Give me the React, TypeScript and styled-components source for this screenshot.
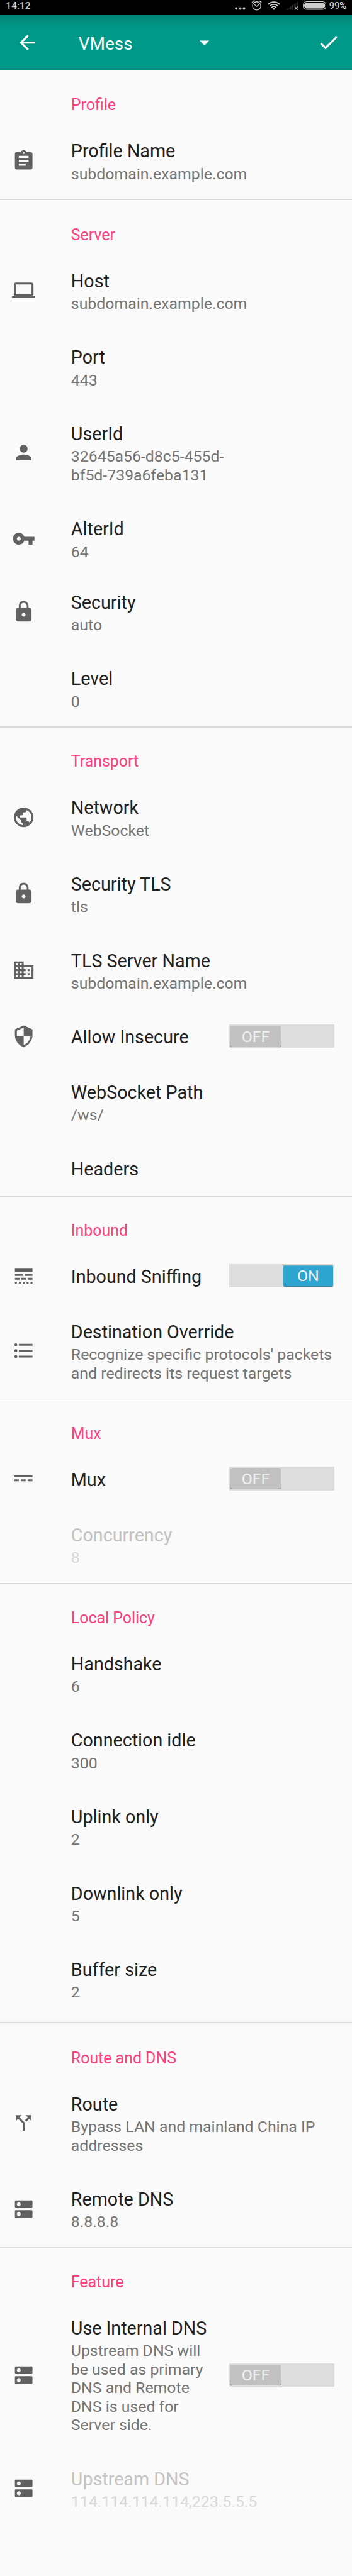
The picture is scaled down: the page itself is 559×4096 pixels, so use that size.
import React from "react";
import styled, { createGlobalStyle, css } from "styled-components";
import type { IconType } from "react-icons";
import {
  MdArrowBack,
  MdArrowDropDown,
  MdAssignment,
  MdCallSplit,
  MdCheck,
  MdDns,
  MdDomain,
  MdFormatListBulleted,
  MdLaptop,
  MdLineStyle,
  MdLock,
  MdPerson,
  MdPublic,
  MdSecurity,
  MdVpnKey,
} from "react-icons/md";

/* Device pixels of a 1080-wide phone converted to page pixels. */
const RATIO = 4096 / 7912;
const u = (n: number) => `${(n * RATIO).toFixed(3)}px`;

const GlobalStyle = createGlobalStyle`
  html, body { margin: 0; padding: 0; background: #fafafa; }
  body { font-family: Roboto, "Liberation Sans", sans-serif; overflow-x: hidden; }
  svg { display: block; flex: none; }
`;

const Screen = styled.div`
  display: flex;
  flex-direction: column;
  width: 100%;
  min-height: 4096px;
  overflow: hidden;
  background: #fafafa;
`;

const StatusBar = styled.header`
  display: flex;
  align-items: flex-start;
  justify-content: space-between;
  height: ${u(47)};
  padding: 0 ${u(18)} 0 ${u(18)};
  box-sizing: border-box;
  background: #000;
  color: #cccccc;
`;

const StatusText = styled.span`
  font-size: ${u(30)};
  line-height: ${u(36)};
  font-weight: 500;
  white-space: nowrap;
`;

const StatusTray = styled.div`
  display: flex;
  align-items: flex-start;
`;

const BatteryText = styled(StatusText)`
  width: ${u(52)};
  margin-left: ${u(9)};
  font-size: ${u(29)};
  letter-spacing: -0.4px;
`;

const Toolbar = styled.nav`
  display: flex;
  align-items: center;
  height: ${u(168)};
  padding: 0 ${u(36)} 0 ${u(49)};
  box-sizing: border-box;
  color: #fff;
  background: linear-gradient(rgba(0, 0, 0, 0.13), rgba(0, 0, 0, 0) ${u(40)}), #009888;

  svg {
    width: ${u(72)};
    height: ${u(72)};
  }
`;

const ProtocolPicker = styled.div`
  display: flex;
  flex: 1;
  align-items: center;
  margin-left: ${u(120)};
`;

const ProtocolName = styled.span`
  width: ${u(351)};
  padding-top: ${u(7)};
  font-size: ${u(54)};
  line-height: ${u(64)};
`;

const Section = styled.section<{ $lead?: number }>`
  padding-top: ${(p) => u(p.$lead ?? 0)};
`;

const Divider = styled.div<{ $hidden?: boolean }>`
  height: ${u(3)};
  background: ${(p) => (p.$hidden ? "transparent" : "#dcdcdc")};
`;

const Category = styled.h2`
  height: ${u(158)};
  margin: 0;
  padding: ${u(76)} 0 0 ${u(218)};
  box-sizing: border-box;
  font-size: ${u(48.1)};
  line-height: ${u(57)};
  font-weight: 400;
  color: #ff4081;
`;

const Row = styled.div<{ $after?: number }>`
  display: flex;
  align-items: center;
  margin-bottom: ${(p) => u(p.$after ?? 0)};
  padding-right: ${u(54)};
`;

const IconSlot = styled.div`
  width: ${u(181)};
  padding-left: ${u(37)};
  flex: none;
  color: #616161;

  svg {
    width: ${u(72)};
    height: ${u(72)};
  }
`;

const Labels = styled.div`
  flex: 1;
  min-width: 0;
  padding: ${u(57.3)} 0 ${u(48.7)};
`;

const Title = styled.div<{ $disabled?: boolean }>`
  font-size: ${u(55.4)};
  line-height: ${u(64)};
  white-space: nowrap;
  color: ${(p) => (p.$disabled ? "#c3c3c3" : "#212121")};
`;

const Summary = styled.div<{ $disabled?: boolean }>`
  margin-top: ${u(8)};
  font-size: ${u(48)};
  line-height: ${u(57)};
  white-space: pre;
  color: ${(p) => (p.$disabled ? "#d8d8d8" : "#757575")};
`;

const Track = styled.div<{ $on: boolean }>`
  display: flex;
  align-items: center;
  justify-content: ${(p) => (p.$on ? "flex-end" : "flex-start")};
  width: ${u(322)};
  height: ${u(72)};
  padding: 0 ${u(4)};
  box-sizing: border-box;
  background: #dddddd;
`;

const Thumb = styled.div<{ $on: boolean }>`
  width: ${u(153)};
  height: ${u(62)};
  border-radius: ${u(4)};
  font-size: ${u(48)};
  line-height: ${u(65)};
  text-align: center;
  color: #f0f0f0;
  ${(p) =>
    p.$on
      ? css`
          background: #2da5d0;
          box-shadow: 0 ${u(2)} ${u(1)} #3c87a3, inset 0 ${u(2)} 0 #5bb6d8;
        `
      : css`
          background: #c1c1c1;
          box-shadow: 0 ${u(2)} ${u(1)} #737373;
        `}
`;

const MoreDots = () => (
  <svg width={u(42)} height={u(36)} viewBox="716 0 42 36" fill="#ccc">
    <circle cx="724" cy="26" r="4" />
    <circle cx="736" cy="26" r="4" />
    <circle cx="748" cy="26" r="4" />
  </svg>
);

const AlarmIcon = () => (
  <svg width={u(56)} height={u(36)} viewBox="758 0 56 36" fill="none" stroke="#ccc">
    <circle cx="786.3" cy="18" r="12.7" strokeWidth="2.6" />
    <path d="M780 14l6.3 5.5 6.3-5.5" strokeWidth="2.8" />
    <path d="M771.5 9q2-5 8.5-7.5M801 9q-2-5-8.5-7.5" strokeWidth="3" />
  </svg>
);

const WifiIcon = () => (
  <svg width={u(56)} height={u(36)} viewBox="814 0 56 36" fill="none" stroke="#ccc" strokeWidth="3.6">
    <path d="M821 13.5a25.5 25.5 0 0 1 36 0M826 18.5a18.5 18.5 0 0 1 26 0M831.5 23a11 11 0 0 1 15 0" />
    <circle cx="839" cy="27" r="3.2" fill="#ccc" stroke="none" />
  </svg>
);

const NoSignalIcon = () => (
  <svg width={u(58)} height={u(36)} viewBox="870 0 58 36">
    <path
      fill="#2a2a2a"
      d="M876 30l9-6v6zM887 22l5-3.5v11.5h-5zM894 17l5-3.5v16.5h-5zM901 12l5-3.5v8.5h-5zM908 8l5-3.5v12.5h-5z"
    />
    <path d="M902.5 20l10 10M912.5 20l-10 10" stroke="#ccc" strokeWidth="2.4" />
  </svg>
);

const BatteryIcon = () => (
  <svg width={u(72)} height={u(36)} viewBox="928 0 72 36">
    <rect x="929" y="5" width="70" height="24" rx="10.5" fill="none" stroke="#ccc" strokeWidth="2" />
    <rect x="932" y="8" width="64" height="18" rx="8" fill="#ccc" />
  </svg>
);

const MuxIcon = () => (
  <svg viewBox="0 0 24 24" fill="currentColor">
    <path d="M2 9v2h19V9H2zm0 4v2h5v-2H2zm7 0v2h5v-2H9zm7 0v2h5v-2h-5z" />
  </svg>
);

interface Preference {
  title: string;
  summary?: string;
  icon?: IconType | React.FC;
  toggle?: "ON" | "OFF";
  disabled?: boolean;
  after?: number;
}

interface Group {
  name: string;
  lead?: number;
  items: Preference[];
}

const groups: Group[] = [
  {
    name: "Profile",
    items: [{ title: "Profile Name", summary: "subdomain.example.com", icon: MdAssignment }],
  },
  {
    name: "Server",
    lead: 3,
    items: [
      { title: "Host", summary: "subdomain.example.com", icon: MdLaptop },
      { title: "Port", summary: "443" },
      { title: "UserId", summary: "32645a56-d8c5-455d-\nbf5d-739a6feba131", icon: MdPerson },
      { title: "AlterId", summary: "64", icon: MdVpnKey, after: -10 },
      { title: "Security", summary: "auto", icon: MdLock },
      { title: "Level", summary: "0" },
    ],
  },
  {
    name: "Transport",
    items: [
      { title: "Network", summary: "WebSocket", icon: MdPublic },
      { title: "Security TLS", summary: "tls", icon: MdLock },
      { title: "TLS Server Name", summary: "subdomain.example.com", icon: MdDomain },
      { title: "Allow Insecure", icon: MdSecurity, toggle: "OFF" },
      { title: "WebSocket Path", summary: "/ws/" },
      { title: "Headers" },
    ],
  },
  {
    name: "Inbound",
    items: [
      { title: "Inbound Sniffing", icon: MdLineStyle, toggle: "ON" },
      {
        title: "Destination Override",
        summary: "Recognize specific protocols' packets\nand redirects its request targets",
        icon: MdFormatListBulleted,
      },
    ],
  },
  {
    name: "Mux",
    items: [
      { title: "Mux", icon: MuxIcon, toggle: "OFF" },
      { title: "Concurrency", summary: "8", disabled: true },
    ],
  },
  {
    name: "Local Policy",
    items: [
      { title: "Handshake", summary: "6" },
      { title: "Connection idle", summary: "300" },
      { title: "Uplink only", summary: "2" },
      { title: "Downlink only", summary: "5" },
      { title: "Buffer size", summary: "2", after: 14 },
    ],
  },
  {
    name: "Route and DNS",
    lead: 3,
    items: [
      { title: "Route", summary: "Bypass LAN and mainland China IP\naddresses", icon: MdCallSplit },
      { title: "Remote DNS", summary: "8.8.8.8", icon: MdDns },
    ],
  },
  {
    name: "Feature",
    items: [
      {
        title: "Use Internal DNS",
        summary: "Upstream DNS will\nbe used as primary\nDNS and Remote\nDNS is used for\nServer side.",
        icon: MdDns,
        toggle: "OFF",
      },
      { title: "Upstream DNS", summary: "114.114.114.114,223.5.5.5", icon: MdDns, disabled: true },
    ],
  },
];

const PreferenceRow = ({ title, summary, icon: Icon, toggle, disabled, after }: Preference) => (
  <Row $after={after}>
    <IconSlot>{Icon && <Icon />}</IconSlot>
    <Labels>
      <Title $disabled={disabled}>{title}</Title>
      {summary && <Summary $disabled={disabled}>{summary}</Summary>}
    </Labels>
    {toggle && (
      <Track $on={toggle === "ON"}>
        <Thumb $on={toggle === "ON"}>{toggle}</Thumb>
      </Track>
    )}
  </Row>
);

export default function App() {
  return (
    <Screen>
      <GlobalStyle />
      <StatusBar>
        <StatusText>14:12</StatusText>
        <StatusTray>
          <MoreDots />
          <AlarmIcon />
          <WifiIcon />
          <NoSignalIcon />
          <BatteryIcon />
          <BatteryText>99%</BatteryText>
        </StatusTray>
      </StatusBar>
      <Toolbar>
        <MdArrowBack />
        <ProtocolPicker>
          <ProtocolName>VMess</ProtocolName>
          <MdArrowDropDown />
        </ProtocolPicker>
        <MdCheck />
      </Toolbar>
      <main>
        {groups.map((group, i) => (
          <React.Fragment key={group.name}>
            <Divider $hidden={i === 0} />
            <Section $lead={group.lead}>
              <Category>{group.name}</Category>
              {group.items.map((item) => (
                <PreferenceRow key={item.title} {...item} />
              ))}
            </Section>
          </React.Fragment>
        ))}
      </main>
    </Screen>
  );
}
